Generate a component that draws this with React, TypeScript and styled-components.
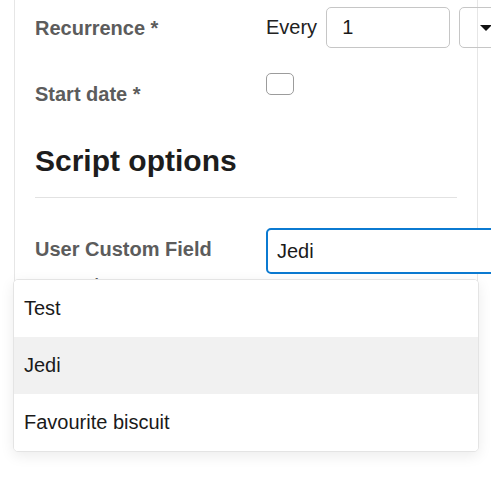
import React from 'react';
import styled, { createGlobalStyle } from 'styled-components';

const GlobalStyle = createGlobalStyle`
  html {
    overflow: hidden;
  }
  body {
    margin: 0;
    padding: 0;
    min-height: 100vh;
    background: #ffffff;
    font-family: "Liberation Sans", Arial, sans-serif;
  }
`;

const Panel = styled.div`
  position: relative;
  box-sizing: border-box;
  margin-left: 14px;
  width: 464px;
  height: 440px;
  padding: 7px 20px 0;
  border-left: 1px solid #e6e6e6;
  border-right: 1px solid #e6e6e6;
`;

const FormRow = styled.div<{ $gap?: number }>`
  display: grid;
  grid-template-columns: 231px auto;
  margin-top: ${p => p.$gap || 0}px;
`;

const Label = styled.div`
  box-sizing: border-box;
  margin-top: 3px;
  padding-right: 12px;
  font-size: 20px;
  font-weight: 700;
  line-height: 36px;
  color: #5c5c5c;
`;

const Field = styled.div<{ $align?: string }>`
  display: flex;
  align-items: ${p => p.$align || 'center'};
  gap: 9px;
  white-space: nowrap;
  min-width: 0;
`;

const FieldText = styled.span`
  font-size: 20px;
  color: #222222;
`;

const NumberInput = styled.input`
  box-sizing: border-box;
  flex-shrink: 0;
  width: 124px;
  height: 41px;
  padding: 0 15px;
  border: 1px solid #c6c6c6;
  border-radius: 5px;
  font: inherit;
  font-size: 20px;
  color: #1a1a1a;
  background: #ffffff;
  outline: none;
`;

const SelectBox = styled.div`
  box-sizing: border-box;
  flex-shrink: 0;
  display: flex;
  align-items: center;
  width: 70px;
  height: 41px;
  padding-left: 20px;
  border: 1px solid #c6c6c6;
  border-radius: 5px;
  background: transparent;
`;

const Caret = styled.span`
  width: 0;
  height: 0;
  border-left: 6px solid transparent;
  border-right: 6px solid transparent;
  border-top: 6px solid #111111;
`;

const Checkbox = styled.span`
  box-sizing: border-box;
  display: block;
  width: 28px;
  height: 22px;
  border: 1px solid #9c9c9c;
  border-radius: 5px;
  background: #ffffff;
`;

const SectionTitle = styled.h2`
  margin: 31px 0 0;
  font-size: 30px;
  font-weight: 700;
  line-height: 36px;
  color: #1d1d1d;
`;

const Divider = styled.div`
  height: 1px;
  margin-top: 18px;
  background: #e2e2e2;
`;

const TextInput = styled.input`
  box-sizing: border-box;
  flex-shrink: 0;
  width: 260px;
  height: 46px;
  padding: 0 9px;
  border: 2px solid #0b7ad1;
  border-radius: 5px;
  font: inherit;
  font-size: 20px;
  color: #1a1a1a;
  background: #ffffff;
  outline: none;
`;

const Menu = styled.div`
  position: absolute;
  top: 279px;
  left: -2px;
  z-index: 2;
  box-sizing: border-box;
  width: 466px;
  background: #ffffff;
  border: 1px solid #e4e4e4;
  border-radius: 5px;
  box-shadow: 0 4px 14px rgba(0, 0, 0, 0.08);
  overflow: hidden;
`;

const MenuItem = styled.div<{ $active?: boolean }>`
  display: flex;
  align-items: center;
  height: 57px;
  padding: 0 10px;
  font-size: 20px;
  color: #1a1a1a;
  background: ${p => (p.$active ? '#f1f1f1' : '#ffffff')};
`;

const options = ['Test', 'Jedi', 'Favourite biscuit'];

export default function App() {
  return (
    <>
      <GlobalStyle />
      <Panel>
        <FormRow>
          <Label>Recurrence *</Label>
          <Field>
            <FieldText>Every</FieldText>
            <NumberInput defaultValue="1" readOnly />
            <SelectBox>
              <Caret />
            </SelectBox>
          </Field>
        </FormRow>

        <FormRow $gap={25}>
          <Label>Start date *</Label>
          <Field $align="flex-start">
            <Checkbox />
          </Field>
        </FormRow>

        <SectionTitle>Script options</SectionTitle>
        <Divider />

        <FormRow $gap={30}>
          <Label>User Custom Field name *</Label>
          <Field $align="flex-start">
            <TextInput defaultValue="Jedi" readOnly />
          </Field>
        </FormRow>

        <Menu>
          {options.map(o => (
            <MenuItem key={o} $active={o === 'Jedi'}>
              {o}
            </MenuItem>
          ))}
        </Menu>
      </Panel>
    </>
  );
}
